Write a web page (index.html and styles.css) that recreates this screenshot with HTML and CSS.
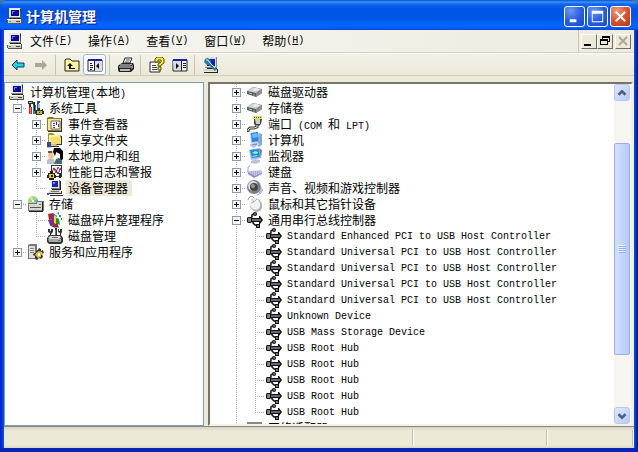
FILE: index.html
```html
<!DOCTYPE html>
<html lang="zh-CN">
<head>
<meta charset="utf-8">
<title>计算机管理</title>
<link rel="stylesheet" href="styles.css">
</head>
<body>
<svg class="defs" aria-hidden="true">
  <symbol id="pc" viewBox="0 0 16 16">
    <path d="M2 0h12v10H2z" fill="#888"/><path d="M2 0h11v9H2z" fill="#e8e8e0"/><path d="M13 1h1v9H3v1h11z" fill="#222"/>
    <path d="M4 2h8v6H4z" fill="#0a0a90"/><path d="M5 3h3v1H6v2H5z" fill="#5b7cff"/>
    <path d="M0 11h14v4H0z" fill="#d4d0c8"/><path d="M0 11h14v1H0z" fill="#fff"/><path d="M14 11h1v4h-1zM1 15h14v1H1zM0 12h1v3H0z" fill="#555"/><path d="M9 13h4v1H9z" fill="#444"/><path d="M2 13h2v1H2z" fill="#4a4"/>
  </symbol>
  <symbol id="tools" viewBox="0 0 16 16">
    <path d="M0 1h5v1h2v3H5V4H3v3H1V4H0z" fill="#333"/><path d="M1 2h3v1H1z" fill="#bbb"/><path d="M1 7h3v7H1z" fill="#c22"/><path d="M2 7h1v7H2z" fill="#f77"/>
    <path d="M5 5h3v9H5z" fill="#1a8a7a"/><path d="M6 2h1v9H6z" fill="#222"/><path d="M9 1h3v2H9zM9 3h2v8H9z" fill="#35508c"/><path d="M10 4h2v6h-2z" fill="#9bd"/>
    <path d="M8 10h2V8h2v2h2V9h1v2h1v3h-2v1H8v-2H7v-2z" fill="#333"/><path d="M9 11h5v3H9z" fill="#d4b52c"/><path d="M11 12h1v1h-1z" fill="#222"/>
  </symbol>
  <symbol id="event" viewBox="0 0 16 16">
    <path d="M0 2l1-1h5l1 1h8v13H0z" fill="#8a7a30"/><path d="M1 3h13v11H1z" fill="#f6e795"/><path d="M15 3v13H1v-1h13V3z" fill="#333"/>
    <path d="M4 5h9v8H4z" fill="#fff" stroke="#666"/><path d="M6 7h2v1H6zM6 9h2v1H6zM6 11h2v1H6z" fill="#555"/><path d="M9 6h1v3H9z" fill="#22c"/><path d="M11 8h1v3h-1z" fill="#c22"/>
  </symbol>
  <symbol id="share" viewBox="0 0 16 16">
    <path d="M1 2l1-1h4l2 2h6v9H1z" fill="#a29242"/><path d="M2 3h11v8H2z" fill="#fdf3a0"/><path d="M4 5h11l-1 7H3z" fill="#f1df72"/><path d="M14 4h1v9H8v-1h6z" fill="#333"/>
    <path d="M0 11h3l2 1h4l2 2-3 1H5l-2 1H0z" fill="#e6b890"/><path d="M0 10h4v5H0z" fill="#234fa0"/><path d="M4 14h8v1H4z" fill="#333"/>
  </symbol>
  <symbol id="users" viewBox="0 0 16 16">
    <path d="M0 16v-4l3-2 4 1 1 5z" fill="#b7c3c9"/><path d="M2 3h4v2l1 4-2 2H2L1 7z" fill="#f0c69c"/><path d="M1 3h4v2H1z" fill="#555"/>
    <path d="M7 0h6l3 3v8l-2 2-2-3V6L9 5 8 8 6 4z" fill="#000"/><path d="M9 4l4 2v5l-3-1-1-3z" fill="#fff"/><path d="M7 16l2-5 3-1 3 3v3z" fill="#1f7e82"/><path d="M10 11l1 2 1-2v4h-2z" fill="#d22"/>
  </symbol>
  <symbol id="perf" viewBox="0 0 16 16">
    <path d="M4 1h11v12H4z" fill="#333"/><path d="M5 2h9v10H5z" fill="#fff"/><path d="M5 8l2-4 2 5 2-6 2 3" fill="none" stroke="#c22"/><path d="M6 4l3 2 2 4 3-6" fill="none" stroke="#228"/>
    <path d="M1 9h2V7h3v2h2v2h1v3H7v2H2v-2H0v-3h1z" fill="#222"/><path d="M2 10h5v4H2z" fill="#e4c52c"/><path d="M4 11h2v2H4zM12 9h2v5h-2z" fill="#222"/>
  </symbol>
  <symbol id="device" viewBox="0 0 16 16">
    <path d="M4 0h9v9H4z" fill="#777"/><path d="M4 0h8v8H4z" fill="#e8e8e0"/><path d="M13 1h1v9H5V9h8z" fill="#222"/><path d="M5 1h6v6H5z" fill="#1724b8"/><path d="M6 2h2v2H6z" fill="#6c8cff"/>
    <path d="M3 10h10l1 3H1z" fill="#d8d4cc"/><path d="M4 11h8v1H4z" fill="#777"/><path d="M1 13h13v1H1zM14 11h1v3h-1zM3 15h13v1H3z" fill="#333"/><path d="M0 13h2v2H0z" fill="#2a64c8"/>
  </symbol>
  <symbol id="storage" viewBox="0 0 16 16">
    <circle cx="5" cy="5" r="5" fill="#9dd68c"/><path d="M5 5L1 2l3-2z" fill="#e6ee66"/><path d="M5 5l5-2v3z" fill="#58a8e0"/><circle cx="5" cy="5" r="1" fill="#fff"/>
    <path d="M0 7h8l1-2h7v10H0z" fill="#777"/><path d="M1 8h8V6h6v8H1z" fill="#d8d8d0"/><path d="M2 11h11v1H2z" fill="#555"/><path d="M15 6v10H1v-1h13V6z" fill="#222"/><path d="M11 8h2v1h-2z" fill="#2a2"/>
  </symbol>
  <symbol id="defrag" viewBox="0 0 16 16">
    <path d="M1 2l5-1v6l-4 1zM6 8l5 1v6H6z" fill="#b4242c"/><path d="M6 1l4 3-3 4H5z" fill="#3c52c0"/><path d="M1 8l5-1 1 7-4-1z" fill="#7a2c96"/><path d="M8 5l4 2 1 6-4-2z" fill="#269038"/><path d="M7 3l2 1v8l-2-1z" fill="#f1d532"/><path d="M10 1l2-1v3zM12 3h2v2h-2zM14 6h1v2h-1z" fill="#268a94"/><path d="M3 13l4 2h5" fill="none" stroke="#333"/>
  </symbol>
  <symbol id="disk" viewBox="0 0 16 16">
    <path d="M1 1h2v2h1V1h2v3L4 6v3H3V5L1 4zM8 0h2v7H8zM11 1h1v2h1V1h2v3l-1 2v3h-1V5l-2-1z" fill="#333"/><path d="M8 2h1v6H8z" fill="#3b82be"/>
    <path d="M2 7h12l2 3v4l-2 2H2l-2-2v-4z" fill="#333"/><path d="M3 8h10l1 2-2 1H3l-2-1z" fill="#ddd"/><path d="M1 11h13v3H2z" fill="#a7aaa8"/><path d="M5 9h6v1H5z" fill="#666"/><path d="M11 12h2v1h-2z" fill="#2a2"/>
  </symbol>
  <symbol id="service" viewBox="0 0 16 16">
    <path d="M0 1l2-1h7v14l-2 1H0z" fill="#777"/><path d="M1 2h6v12H1z" fill="#ddddd6"/><path d="M2 4h4v1H2zM2 6h4v1H2zM2 8h4v1H2z" fill="#888"/>
    <path d="M8 7l2-1 1-2 2 1v2l2-1 1 3-2 1 1 3-2 2-2-1-2 2-2-1v-3l-2-1 1-2h2z" fill="#333"/><path d="M8 9l3-2 3 1 1 2-2 1v2l-3 1-2-2-1-1z" fill="#dfc23a"/><path d="M10 9h2v3h-2z" fill="#fff"/>
  </symbol>
  <symbol id="drive" viewBox="0 0 16 16">
    <path d="M0 7l6-4 9 2v4l-6 4-9-3z" fill="#5e5e62"/><path d="M0 7l6-4 9 2-6 4z" fill="#cfcfd2"/><path d="M5 6l3-2 4 1-3 2z" fill="#eee"/><path d="M9 9l6-4v4l-6 4z" fill="#8b8b90"/><path d="M2 9l3 1" stroke="#bbb"/><path d="M6 11h2" stroke="#4d4"/>
  </symbol>
  <symbol id="port" viewBox="0 0 16 16">
    <path d="M6 0h9v3H6z" fill="#e4de62"/><path d="M7 1h1v1H7zM9 1h1v1H9zM11 1h1v1h-1zM13 1h1v1h-1z" fill="#555"/><path d="M7 3h8l-1 5-2 2H9L7 8z" fill="#444"/><path d="M8 3h5v5H9z" fill="#cdcdc8"/>
    <path d="M10 9v2L7 12H3l-2 2v2" fill="none" stroke="#444" stroke-width="3"/><path d="M10 9v2L7 12H3l-2 2v1" fill="none" stroke="#ddd"/>
  </symbol>
  <symbol id="computer" viewBox="0 0 16 16">
    <path d="M3 1l8-1 1 10-8 1z" fill="#a8c8ec"/><path d="M4 1l7-1 1 9-7 1z" fill="#2e83e2"/><path d="M5 2l5-1 1 4-5 1z" fill="#68c0fb"/><path d="M12 1l3 1v11l-4 2V9z" fill="#83aada"/><path d="M3 12l7-2 3 2-6 4-4-2z" fill="#bccde5"/><path d="M5 13l5-1" stroke="#738bb0"/>
  </symbol>
  <symbol id="monitor" viewBox="0 0 16 16">
    <path d="M2 2l10-2 2 10-10 2z" fill="#a8bedc"/><path d="M3 2l9-1 1 8-8 1z" fill="#248bdc"/><path d="M5 5l3-2 3 1v1L9 6z" fill="#a1ef9d"/><path d="M5 8l5-1 1 1-5 1z" fill="#89e4ff"/><path d="M12 0l3 2-1 8z" fill="#637da5"/><path d="M4 13l4-2 5 1v2l-4 2-5-1z" fill="#bac5dc"/>
  </symbol>
  <symbol id="keyboard" viewBox="0 0 16 16">
    <path d="M0 6l6 3 9-2v3l-8 4-6-4z" fill="#8b8fc4"/><path d="M0 6l4 1 10-1 2 2-8 4-7-4z" fill="#c6c9ea"/><path d="M4 8h10M6 10h6" stroke="#898dbb" stroke-dasharray="1 1"/><path d="M1 6V3l2-1" fill="none" stroke="#aaa"/>
  </symbol>
  <symbol id="sound" viewBox="0 0 16 16">
    <ellipse cx="7" cy="7" rx="7" ry="7" fill="#808084"/><ellipse cx="6" cy="6" rx="5" ry="5" fill="#d7d7dc"/><circle cx="7" cy="7" r="4" fill="#444"/><circle cx="6" cy="6" r="2" fill="#999"/><path d="M12 13q3-2 2-6M10 15q5-1 6-6" fill="none" stroke="#969bd2"/>
  </symbol>
  <symbol id="mouse" viewBox="0 0 16 16">
    <path d="M1 4q0-3 4-4l3 3" fill="none" stroke="#999"/><ellipse cx="9" cy="9" rx="6" ry="7" transform="rotate(-25 9 9)" fill="#b0b0b5"/><ellipse cx="8" cy="8" rx="5" ry="6" transform="rotate(-25 8 8)" fill="#f2f2f2"/><path d="M4 7q3 0 6-4M7 6l-2-3" fill="none" stroke="#b3b3ba"/>
  </symbol>
  <symbol id="usb" viewBox="0 0 16 16">
    <path d="M3 7l2-2V3l3-2M6 9v2l2 2h2" fill="none" stroke="#111" stroke-width="1.500"/>
    <path d="M4 6h8V4h1l3 4-3 4h-1v-2H4z" fill="#111"/><path d="M5 8h9" stroke="#888" stroke-width="1.500"/>
    <path d="M1 5h3l1 1v4l-1 1H1l-1-1V6z" fill="#111"/><path d="M1 6h3v4H1z" fill="#808080"/>
    <circle cx="8" cy="2" r="2" fill="#111"/><circle cx="8" cy="2" r="1" fill="#777"/>
    <path d="M9 12h4v4H9z" fill="#111"/><path d="M10 13h2v2h-2z" fill="#777"/>
  </symbol>
  <symbol id="network" viewBox="0 0 16 16"><path d="M0 2h15v8H0z" fill="#888"/><path d="M1 4h13v6H1z" fill="#7a9"/></symbol>
  <symbol id="back" viewBox="0 0 16 16"><path d="M2 8l5-5v3h7v4H7v3z" fill="#1fd5df" stroke="#123a66"/></symbol>
  <symbol id="forward" viewBox="0 0 16 16"><path d="M14 8L9 3v3H2v4h7v3z" fill="#aca899"/></symbol>
  <symbol id="up" viewBox="0 0 16 16"><path d="M1 3l1-1h4l2 2h7v10H1z" fill="#fcf4a0" stroke="#222"/><path d="M6 6l3 3H7v2h4v1H5V9H3z" fill="#111"/></symbol>
  <symbol id="tree" viewBox="0 0 16 16"><path d="M1 3h14v11H1z" fill="#fff" stroke="#222"/><path d="M1 2h14v2H1z" fill="#17229c"/><path d="M8 4h7v10H8z" fill="#dcd9e8"/><path d="M7 4h1v10H7zM3 6h2v1H3zM3 8h3v1H3zM3 10h3v1H3zM3 12h2v1H3z" fill="#222"/><path d="M12 6v6L9 9z" fill="#111"/></symbol>
  <symbol id="props" viewBox="0 0 16 16"><path d="M1 3h14v11H1z" fill="#fff" stroke="#222"/><path d="M1 2h14v2H1z" fill="#17229c"/><path d="M1 4h8v9H2z" fill="#dcd9e8"/><path d="M9 4h1v10H9zM11 6h3v1h-3zM11 8h3v1h-3zM11 10h3v1h-3z" fill="#222"/><path d="M4 6v6l3-3z" fill="#111"/></symbol>
  <symbol id="print" viewBox="0 0 16 16"><path d="M5 6l2-5h7l-2 5z" fill="#fff" stroke="#222"/><path d="M8 3h4M7 5h4" stroke="#555"/><path d="M1 8l3-2h11l1 2v4l-3 3H1l-1-2V9z" fill="#222"/><path d="M2 8h10l2-1M1 10h12" fill="none" stroke="#ddd"/><path d="M2 12h10v2H2z" fill="#bbb"/><path d="M13 9l2-1v3l-2 1z" fill="#888"/></symbol>
  <symbol id="help" viewBox="0 0 16 16"><path d="M1 5h10v10H1z" fill="#fff" stroke="#222"/><path d="M3 8h4v1H3zM3 10h5v1H3zM3 12h5v1H3z" fill="#444"/><path d="M6 5V2l2-2h5l2 2v4l-3 2v1H9V7l3-2V3H9v2z" fill="#f7e92f" stroke="#56500c"/><path d="M9 10h3v3H9z" fill="#f7e92f" stroke="#56500c"/></symbol>
  <symbol id="scan" viewBox="0 0 16 16"><path d="M2 0h12v11H2z" fill="#888"/><path d="M2 0h11v10H2z" fill="#ddd"/><path d="M4 2h8v7H4z" fill="#1521a8"/><path d="M13 1h1v10H4v1h11v4H1v-1h13V1z" fill="#222"/><path d="M0 12h14v2H0z" fill="#d8d5ca"/><path d="M2 2l3-1 3 3v2l6 6-2 2-6-6H4L1 5z" fill="#267ea9"/><path d="M3 3h2l2 3 5 5" fill="none" stroke="#b9efff"/></symbol>
</svg>
<main class="window">
  <header class="titlebar">
    <svg class="icon"><use href="#pc"/></svg>
    <h1>计算机管理</h1>
    <div class="captions">
      <button aria-label="最小化"><svg viewBox="0 0 20 20"><path d="M5 13h7v3H5z" fill="#fff"/></svg></button>
      <button aria-label="最大化"><svg viewBox="0 0 20 20"><path d="M4 4h12v12H4zM5 7v8h10V7z" fill="#fff" fill-rule="evenodd"/></svg></button>
      <button class="close" aria-label="关闭"><svg viewBox="0 0 20 20"><path d="M5 5l10 10M15 5L5 15" stroke="#fff" stroke-width="2"/></svg></button>
    </div>
  </header>
  <nav class="menubar">
    <svg class="icon"><use href="#pc"/></svg>
    <div class="menus">
      <button>文件<span class="latin">(<u>F</u>)</span></button>
      <button>操作<span class="latin">(<u>A</u>)</span></button>
      <button>查看<span class="latin">(<u>V</u>)</span></button>
      <button>窗口<span class="latin">(<u>W</u>)</span></button>
      <button>帮助<span class="latin">(<u>H</u>)</span></button>
    </div>
    <div class="mdi">
      <button aria-label="最小化窗口"><svg viewBox="0 0 14 12"><path d="M2 9h7v2H2z"/></svg></button>
      <button aria-label="还原窗口"><svg viewBox="0 0 14 12"><path d="M4 1h8v6h-2v3H2V4h2zM5 3v1h5v2h1V3zM3 6v3h6V6z" fill-rule="evenodd"/></svg></button>
      <button class="off" aria-label="关闭窗口" disabled><svg viewBox="0 0 14 12"><path d="M3 2l8 8M11 2l-8 8" stroke="#aca899" stroke-width="2"/></svg></button>
    </div>
  </nav>
  <div class="toolbar">
    <button aria-label="后退"><svg class="icon"><use href="#back"/></svg></button>
    <button aria-label="前进"><svg class="icon"><use href="#forward"/></svg></button>
    <i class="sep"></i>
    <button aria-label="向上"><svg class="icon"><use href="#up"/></svg></button>
    <button class="pressed" aria-label="控制台树"><svg class="icon"><use href="#tree"/></svg></button>
    <i class="sep"></i>
    <button aria-label="打印"><svg class="icon"><use href="#print"/></svg></button>
    <i class="sep"></i>
    <button aria-label="帮助"><svg class="icon"><use href="#help"/></svg></button>
    <button aria-label="操作窗格"><svg class="icon"><use href="#props"/></svg></button>
    <i class="sep"></i>
    <button aria-label="扫描"><svg class="icon"><use href="#scan"/></svg></button>
  </div>
  <div class="panes">
    <section class="pane nav">
      <ul class="tree">
        <li><svg class="icon"><use href="#pc"/></svg><span>计算机管理<span class="latin">(</span>本地<span class="latin">)</span></span></li>
        <li><i class="g v h"><button class="ex minus" aria-label="折叠"></button></i><svg class="icon"><use href="#tools"/></svg><span>系统工具</span></li>
        <li><i class="g v"></i><i class="g v h"><button class="ex" aria-label="展开"></button></i><svg class="icon"><use href="#event"/></svg><span>事件查看器</span></li>
        <li><i class="g v"></i><i class="g v h"><button class="ex" aria-label="展开"></button></i><svg class="icon"><use href="#share"/></svg><span>共享文件夹</span></li>
        <li><i class="g v"></i><i class="g v h"><button class="ex" aria-label="展开"></button></i><svg class="icon"><use href="#users"/></svg><span>本地用户和组</span></li>
        <li><i class="g v"></i><i class="g v h"><button class="ex" aria-label="展开"></button></i><svg class="icon"><use href="#perf"/></svg><span>性能日志和警报</span></li>
        <li><i class="g v"></i><i class="g v h end"></i><svg class="icon"><use href="#device"/></svg><span class="selected">设备管理器</span></li>
        <li><i class="g v h"><button class="ex minus" aria-label="折叠"></button></i><svg class="icon"><use href="#storage"/></svg><span>存储</span></li>
        <li><i class="g v"></i><i class="g v h"></i><svg class="icon"><use href="#defrag"/></svg><span>磁盘碎片整理程序</span></li>
        <li><i class="g v"></i><i class="g v h end"></i><svg class="icon"><use href="#disk"/></svg><span>磁盘管理</span></li>
        <li><i class="g v h end"><button class="ex" aria-label="展开"></button></i><svg class="icon"><use href="#service"/></svg><span>服务和应用程序</span></li>
      </ul>
    </section>
    <section class="pane detail">
      <ul class="tree">
        <li><i class="g v h"><button class="ex" aria-label="展开"></button></i><svg class="icon"><use href="#drive"/></svg><span>磁盘驱动器</span></li>
        <li><i class="g v h"><button class="ex" aria-label="展开"></button></i><svg class="icon"><use href="#drive"/></svg><span>存储卷</span></li>
        <li><i class="g v h"><button class="ex" aria-label="展开"></button></i><svg class="icon"><use href="#port"/></svg><span>端口<span class="latin"> (COM </span>和<span class="latin"> LPT)</span></span></li>
        <li><i class="g v h"><button class="ex" aria-label="展开"></button></i><svg class="icon"><use href="#computer"/></svg><span>计算机</span></li>
        <li><i class="g v h"><button class="ex" aria-label="展开"></button></i><svg class="icon"><use href="#monitor"/></svg><span>监视器</span></li>
        <li><i class="g v h"><button class="ex" aria-label="展开"></button></i><svg class="icon"><use href="#keyboard"/></svg><span>键盘</span></li>
        <li><i class="g v h"><button class="ex" aria-label="展开"></button></i><svg class="icon"><use href="#sound"/></svg><span>声音、视频和游戏控制器</span></li>
        <li><i class="g v h"><button class="ex" aria-label="展开"></button></i><svg class="icon"><use href="#mouse"/></svg><span>鼠标和其它指针设备</span></li>
        <li><i class="g v h"><button class="ex minus" aria-label="折叠"></button></i><svg class="icon"><use href="#usb"/></svg><span>通用串行总线控制器</span></li>
        <li><i class="g v"></i><i class="g v h"></i><svg class="icon"><use href="#usb"/></svg><span class="latin">Standard Enhanced PCI to USB Host Controller</span></li>
        <li><i class="g v"></i><i class="g v h"></i><svg class="icon"><use href="#usb"/></svg><span class="latin">Standard Universal PCI to USB Host Controller</span></li>
        <li><i class="g v"></i><i class="g v h"></i><svg class="icon"><use href="#usb"/></svg><span class="latin">Standard Universal PCI to USB Host Controller</span></li>
        <li><i class="g v"></i><i class="g v h"></i><svg class="icon"><use href="#usb"/></svg><span class="latin">Standard Universal PCI to USB Host Controller</span></li>
        <li><i class="g v"></i><i class="g v h"></i><svg class="icon"><use href="#usb"/></svg><span class="latin">Standard Universal PCI to USB Host Controller</span></li>
        <li><i class="g v"></i><i class="g v h"></i><svg class="icon"><use href="#usb"/></svg><span class="latin">Unknown Device</span></li>
        <li><i class="g v"></i><i class="g v h"></i><svg class="icon"><use href="#usb"/></svg><span class="latin">USB Mass Storage Device</span></li>
        <li><i class="g v"></i><i class="g v h"></i><svg class="icon"><use href="#usb"/></svg><span class="latin">USB Root Hub</span></li>
        <li><i class="g v"></i><i class="g v h"></i><svg class="icon"><use href="#usb"/></svg><span class="latin">USB Root Hub</span></li>
        <li><i class="g v"></i><i class="g v h"></i><svg class="icon"><use href="#usb"/></svg><span class="latin">USB Root Hub</span></li>
        <li><i class="g v"></i><i class="g v h"></i><svg class="icon"><use href="#usb"/></svg><span class="latin">USB Root Hub</span></li>
        <li><i class="g v"></i><i class="g v h end"></i><svg class="icon"><use href="#usb"/></svg><span class="latin">USB Root Hub</span></li>
        <li><i class="g v h"><button class="ex" aria-label="展开"></button></i><svg class="icon"><use href="#network"/></svg><span>网络适配器</span></li>
      </ul>
      <div class="scrollbar">
        <button class="arrow" aria-label="向上滚动"><svg viewBox="0 0 16 16"><path d="M4 10l4-4 4 4" fill="none" stroke="#4d6185" stroke-width="3"/></svg></button>
        <div class="track"><div class="thumb"><svg viewBox="0 0 8 8"><path d="M0 0h7v1H0zM0 2h7v1H0zM0 4h7v1H0zM0 6h7v1H0z" fill="#eef4fe"/><path d="M1 1h7v1H1zM1 3h7v1H1zM1 5h7v1H1zM1 7h7v1H1z" fill="#8cb0f8"/></svg></div></div>
        <button class="arrow" aria-label="向下滚动"><svg viewBox="0 0 16 16"><path d="M4 6l4 4 4-4" fill="none" stroke="#4d6185" stroke-width="3"/></svg></button>
      </div>
    </section>
  </div>
  <footer class="status"><span class="wide"></span><span></span><span class="last"></span></footer>
</main>
</body>
</html>
```
FILE: styles.css
```css
* { box-sizing: border-box; }
body {
  margin: 0;
  background: #3c7a9c;
  color: #000;
  font: 12px/16px "Noto Sans CJK SC", sans-serif;
}
button {
  display: flex;
  align-items: center;
  justify-content: center;
  margin: 0;
  padding: 0;
  border: 0;
  background: none;
  color: inherit;
  font: inherit;
}
.defs { position: absolute; width: 0; height: 0; }
.icon { display: block; flex: none; width: 16px; height: 16px; }
.latin {
  font-family: "Liberation Mono", monospace;
  font-size: 10px;
  white-space: pre;
}
.window {
  display: flex;
  flex-direction: column;
  height: 100vh;
  padding: 0 4px 4px;
  border-radius: 8px 8px 0 0;
  overflow: hidden;
  background: linear-gradient(90deg, #0019cf, #0855dd 4px, #0855dd calc(100% - 4px), #00138c);
  box-shadow: inset 0 -4px #0a24b8;
}
.titlebar {
  display: flex;
  align-items: center;
  gap: 3px;
  flex: none;
  height: 30px;
  margin: 0 -4px;
  padding: 2px 7px 0;
  background: linear-gradient(#0850c8 0, #3c94ff 2px, #1468ee 4px, #0054e3 9px, #0055e5 18px, #0266ff 25px, #0262f6 28px, #003dd7 30px);
}
h1 {
  flex: 1;
  margin: 0;
  color: #fff;
  font-size: 14px;
  font-weight: 700;
  line-height: 20px;
  text-shadow: 1px 1px #0a1883;
}
.captions { display: flex; gap: 2px; }
.captions button {
  width: 21px;
  height: 21px;
  border: 1px solid #fff;
  border-radius: 3px;
  background: radial-gradient(circle at 30% 20%, #6d96f5, #2a5fe0 50%, #1848cf);
}
.captions .close { background: radial-gradient(circle at 30% 20%, #ef9a82, #da5334 50%, #bb3413); }
.captions svg { width: 19px; height: 19px; }
.menubar {
  display: flex;
  align-items: center;
  flex: none;
  height: 23px;
  padding-left: 3px;
  background: linear-gradient(90deg, #f6f5f1, #eeece0);
  border-bottom: 1px solid #d5d2c0;
}
.menus { display: flex; flex: 1; gap: 16px; padding-left: 7px; }
.mdi {
  display: flex;
  align-items: center;
  align-self: stretch;
  padding: 0 3px 0 2px;
  border-left: 1px solid #c9c6b4;
}
.mdi button {
  width: 16px;
  height: 15px;
  border: 1px solid;
  border-color: #fff #716f64 #716f64 #fff;
  background: #ece9d8;
}
.mdi .off { margin-left: 2px; }
.mdi svg { width: 14px; height: 12px; }
.toolbar {
  display: flex;
  align-items: center;
  flex: none;
  height: 23px;
  padding-left: 2px;
  border-top: 1px solid #fff;
  border-bottom: 1px solid #cfccba;
  background: linear-gradient(#f4f2e8, #ebe8d9);
}
.toolbar button { width: 23px; height: 21px; }
.toolbar .pressed { border: 1px solid #98b5e2; border-radius: 3px; background: #fff; }
.sep { flex: none; width: 1px; height: 20px; margin: 0 4px 0 3px; background: #c8c5b2; }
.panes {
  display: flex;
  flex: 1;
  gap: 4px;
  min-height: 0;
  padding: 6px 1px 0 0;
  background: #ece9d8;
}
.pane { display: flex; overflow: hidden; background: #fff; }
.nav { flex: 0 0 200px; padding: 1px 0 0 3px; border: 1px solid #7f9db9; }
.detail { flex: 1; border: 2px solid #77756b; border-right-color: #f4f2e8; border-bottom-color: #f4f2e8; }
.detail .tree { flex: 1; padding-left: 17px; }
.tree { margin: 0; padding: 0; list-style: none; }
.tree li { display: flex; height: 16px; white-space: nowrap; }
.tree .icon { margin: 0 3px 0 1px; }
.tree li > span { height: 16px; padding: 0 2px; }
.tree li > .latin { line-height: 18px; }
.tree .selected { background: #ece9d8; padding-right: 4px; }
.g {
  display: flex;
  align-items: center;
  justify-content: center;
  flex: none;
  width: 19px;
  background-repeat: no-repeat;
}
.v { background-image: repeating-linear-gradient(#aaa 0 1px, transparent 1px 2px); background-size: 1px 16px; background-position: 9px 0; }
.h {
  background-image: repeating-linear-gradient(#aaa 0 1px, transparent 1px 2px), repeating-linear-gradient(90deg, #aaa 0 1px, transparent 1px 2px);
  background-size: 1px 16px, 10px 1px;
  background-position: 9px 0, 9px 8px;
}
.h.end { background-size: 1px 9px, 10px 1px; }
.ex {
  width: 9px;
  height: 9px;
  margin-top: 1px;
  border: 1px solid #8a9aae;
  background: linear-gradient(#000, #000) 1px 3px / 5px 1px no-repeat, linear-gradient(#000, #000) 3px 1px / 1px 5px no-repeat, #f8f8f5;
}
.ex.minus { background: linear-gradient(#000, #000) 1px 3px / 5px 1px no-repeat, #f8f8f5; }
.scrollbar { display: flex; flex-direction: column; flex: none; width: 17px; background: #f6f5f0; }
.arrow {
  flex: none;
  width: 16px;
  height: 17px;
  border: 1px solid #b4c8f0;
  border-radius: 3px;
  background: linear-gradient(135deg, #dde7fe, #b7cbf8);
}
.arrow svg { width: 14px; height: 14px; }
.track { display: flex; flex: 1; flex-direction: column; }
.track::before { content: ""; flex: 42; }
.track::after { content: ""; flex: 52; }
.thumb {
  display: flex;
  flex: 212;
  align-items: center;
  justify-content: center;
  width: 16px;
  border: 1px solid #98b1e4;
  border-radius: 2px;
  background: linear-gradient(90deg, #d3e0fd, #c3d3fd 60%, #b5c8f6);
}
.thumb svg { width: 8px; height: 8px; }
.status {
  display: flex;
  flex: none;
  height: 22px;
  padding: 3px 1px 2px 0;
  border-top: 1px solid #8b897c;
  background: linear-gradient(#d5d2c2, #ece9d8 4px, #ece9d8 18px, #d8d5c4);
}
.status span { flex: 134; border-right: 1px solid #c2bfae; box-shadow: 1px 0 #fff; }
.status .wide { flex: 409; }
.status .last { flex: 85; }
```
